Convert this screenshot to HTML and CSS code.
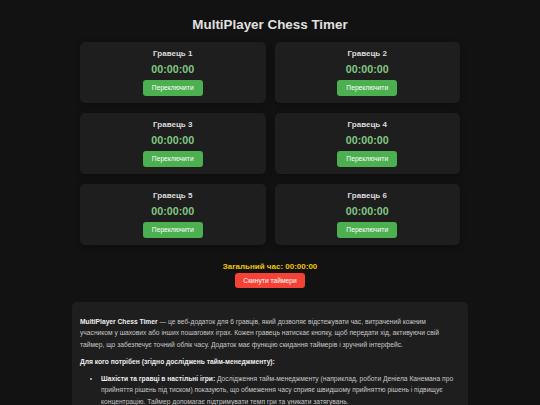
FILE: index.html
```html
<!DOCTYPE html>
<html lang="uk">
<head>
  <meta charset="UTF-8" />
  <meta name="viewport" content="width=device-width, initial-scale=1.0" />
  <title>MultiPlayer Chess Timer</title>
  <link rel="stylesheet" href="styles.css">
</head>
<body>
  <h1>MultiPlayer Chess Timer</h1>

  <div class="players">
    <div class="player">
      <h3>Гравець 1</h3>
      <div class="time">00:00:00</div>
      <button class="switch">Переключити</button>
    </div>
    <div class="player">
      <h3>Гравець 2</h3>
      <div class="time">00:00:00</div>
      <button class="switch">Переключити</button>
    </div>
    <div class="player">
      <h3>Гравець 3</h3>
      <div class="time">00:00:00</div>
      <button class="switch">Переключити</button>
    </div>
    <div class="player">
      <h3>Гравець 4</h3>
      <div class="time">00:00:00</div>
      <button class="switch">Переключити</button>
    </div>
    <div class="player">
      <h3>Гравець 5</h3>
      <div class="time">00:00:00</div>
      <button class="switch">Переключити</button>
    </div>
    <div class="player">
      <h3>Гравець 6</h3>
      <div class="time">00:00:00</div>
      <button class="switch">Переключити</button>
    </div>
  </div>

  <div class="total">Загальний час: <span id="total">00:00:00</span></div>
  <button class="reset">Скинути таймери</button>

  <div class="info">
    <p><strong>MultiPlayer Chess Timer</strong> — це веб-додаток для 6 гравців, який дозволяє відстежувати час, витрачений кожним учасником у шахових або інших пошагових іграх. Кожен гравець натискає кнопку, щоб передати хід, активуючи свій таймер, що забезпечує точний облік часу. Додаток має функцію скидання таймерів і зручний інтерфейс.</p>
    <p><strong>Для кого потрібен (згідно досліджень тайм-менеджменту):</strong></p>
    <ul>
      <li><strong>Шахісти та гравці в настільні ігри:</strong> Дослідження тайм-менеджменту (наприклад, роботи Деніела Канемана про прийняття рішень під тиском) показують, що обмеження часу сприяє швидшому прийняттю рішень і підвищує концентрацію. Таймер допомагає підтримувати темп гри та уникати затягувань.</li>
      <li><strong>Вчителі та тренери:</strong> Таймер допомагає рівномірно розподіляти час між учасниками занять.</li>
    </ul>
  </div>
</body>
</html>
```

FILE: styles.css
```css
html {
  scrollbar-width: none;
}
body {
  margin: 0;
  padding: 0 8px 20px;
  font-family: 'Liberation Sans', Arial, sans-serif;
  background: #121212;
  color: #e0e0e0;
  display: flex;
  flex-direction: column;
  align-items: center;
  text-align: center;
}
h1 {
  font-size: 13.4px;
  line-height: 16px;
  margin: 17px 0 8.7px;
  color: #e0e0e0;
}
.players {
  width: 380px;
  display: grid;
  grid-template-columns: 1fr 1fr;
  column-gap: 9px;
  row-gap: 9.5px;
}
.player {
  background: #1e1e1e;
  border-radius: 5px;
  padding: 7px 0 7.6px;
  box-shadow: 0 2px 6px rgba(0,0,0,0.3);
}
.player h3 {
  margin: 0;
  font-size: 8px;
  line-height: 10px;
  color: #dcdcdc;
}
.time {
  margin-top: 4px;
  font-size: 10.7px;
  line-height: 13px;
  font-weight: bold;
  color: #81c784;
}
button {
  font-family: inherit;
  font-size: 6.7px;
  line-height: 7.7px;
  color: #fff;
  border: none;
  border-radius: 3px;
  cursor: pointer;
}
.switch {
  margin-top: 4.3px;
  padding: 4px 9px;
  background-color: #4caf50;
}
.total {
  margin-top: 17px;
  font-size: 8px;
  line-height: 10px;
  font-weight: bold;
  color: #f1c40f;
}
.reset {
  margin-top: 0.6px;
  padding: 3.85px 8.5px;
  background-color: #f44336;
}
.info {
  width: 380px;
  margin-top: 13.3px;
  padding: 14px 8px;
  background: #1e1e1e;
  border-radius: 5px;
  text-align: left;
  font-size: 6.7px;
  line-height: 11.4px;
  color: #c8c8c8;
}
.info p {
  margin: 0 0 5.8px;
}
.info strong {
  color: #eee;
}
.info ul {
  margin: 0;
  padding-left: 21px;
}
```
